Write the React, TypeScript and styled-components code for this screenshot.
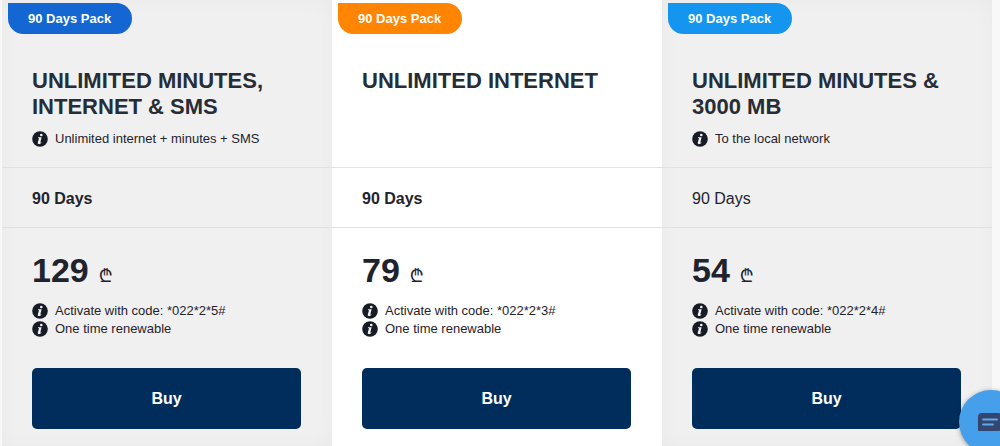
import React from "react";
import styled, { createGlobalStyle } from "styled-components";

const GlobalStyle = createGlobalStyle`
  *, *::before, *::after { box-sizing: border-box; }
  body {
    margin: 0;
    background: #f8f8f8;
    color: #1f232d;
    font-family: "Liberation Sans", Arial, "DejaVu Sans", sans-serif;
  }
`;

const Plans = styled.main`
  display: grid;
  grid-template-columns: repeat(3, minmax(0, 1fr));
  padding: 0 8px 0 2px;
  overflow: hidden;
`;

const Card = styled.article<{ $featured: boolean }>`
  display: flex;
  flex-direction: column;
  background: ${(p) => (p.$featured ? "#ffffff" : "#f0f0f0")};
  box-shadow: ${(p) => (p.$featured ? "none" : "inset 0 0 20px rgba(0, 0, 0, 0.03)")};
`;

const Header = styled.header`
  display: flex;
  flex-direction: column;
  align-items: flex-start;
  height: 168px;
  padding-top: 3px;
  border-bottom: 1px solid #e0e1e2;
`;

const Badge = styled.span<{ $color: string }>`
  margin-left: 6px;
  padding: 0 21px 0 20px;
  border-radius: 0 16px 16px 16px;
  background: ${(p) => p.$color};
  color: #ffffff;
  font-size: 13px;
  font-weight: 700;
  line-height: 31px;
`;

const Title = styled.h2`
  margin: 34px 30px 10px;
  color: #272d37;
  font-size: 22px;
  font-weight: 700;
  line-height: 26px;
`;

const Notes = styled.ul`
  margin: 0;
  padding: 0 30px;
  list-style: none;
`;

const Note = styled.li`
  display: flex;
  align-items: center;
  gap: 7px;
  font-size: 13px;
  line-height: 18px;
`;

const InfoSvg = styled.svg`
  flex: none;
  width: 16px;
  height: 16px;
`;

const Duration = styled.p<{ $strong: boolean }>`
  margin: 0;
  padding: 21px 30px 18px;
  border-bottom: 1px solid #e0e1e2;
  font-size: 16px;
  font-weight: ${(p) => (p.$strong ? 700 : 400)};
  line-height: 20px;
`;

const Price = styled.p`
  display: flex;
  align-items: baseline;
  gap: 10px;
  height: 40px;
  margin: 22px 30px 12px;
  font-size: 34px;
  font-weight: 700;
  line-height: 40px;
`;

const Currency = styled.span`
  font-family: "Noto Sans", "DejaVu Sans", sans-serif;
  font-size: 18px;
  font-weight: 400;
`;

const BuyButton = styled.button`
  margin: 30px 31px 17px 30px;
  padding: 0;
  border: 0;
  border-radius: 5px;
  background: #002d5c;
  color: #ffffff;
  font-family: inherit;
  font-size: 16px;
  font-weight: 700;
  line-height: 61px;
  cursor: pointer;
`;

const ChatButton = styled.button`
  position: fixed;
  right: -23px;
  bottom: -8px;
  display: grid;
  place-items: center;
  width: 64px;
  height: 64px;
  padding: 0;
  border: 0;
  border-radius: 50%;
  background: #469fea;
  box-shadow: 0 1px 5px rgba(0, 0, 0, 0.35);
  cursor: pointer;
`;

function InfoIcon() {
  return (
    <InfoSvg viewBox="0 0 16 16" aria-hidden="true">
      <circle cx="8" cy="8" r="7.8" fill="#171b26" />
      <circle cx="9.3" cy="4" r="1.3" fill="#f4f4f4" />
      <path
        d="M6 6.300h3.600L8.300 11.400c-.1.500.3.400.9-.1l.3.400c-1 1.100-2 1.600-2.900 1.400-.8-.2-1-.8-.8-1.500l1.100-3.900c.1-.5-.1-.7-.9-.8z"
        fill="#f4f4f4"
      />
    </InfoSvg>
  );
}

function ChatIcon() {
  return (
    <svg width="26" height="18" viewBox="0 0 26 18" aria-hidden="true">
      <path d="M4 0h16a4 4 0 0 1 4 4v10a4 4 0 0 1-4 4H1a1 1 0 0 1-1-1V4a4 4 0 0 1 4-4z" fill="#34466f" />
      <path d="M5 6.500h14M5 11.500h10" stroke="#5fa9ec" strokeWidth="1.800" strokeLinecap="round" />
    </svg>
  );
}

interface Plan {
  color: string;
  title: string;
  note?: string;
  price: number;
  code: string;
  featured: boolean;
  strongDuration: boolean;
}

const plans: Plan[] = [
  {
    color: "#1467d2",
    title: "UNLIMITED MINUTES, INTERNET & SMS",
    note: "Unlimited internet + minutes + SMS",
    price: 129,
    code: "*022*2*5#",
    featured: false,
    strongDuration: true,
  },
  {
    color: "#ff8503",
    title: "UNLIMITED INTERNET",
    price: 79,
    code: "*022*2*3#",
    featured: true,
    strongDuration: true,
  },
  {
    color: "#1496f0",
    title: "UNLIMITED MINUTES & 3000 MB",
    note: "To the local network",
    price: 54,
    code: "*022*2*4#",
    featured: false,
    strongDuration: false,
  },
];

function PlanCard({ plan }: { plan: Plan }) {
  return (
    <Card $featured={plan.featured}>
      <Header>
        <Badge $color={plan.color}>90 Days Pack</Badge>
        <Title>{plan.title}</Title>
        {plan.note && (
          <Notes>
            <Note>
              <InfoIcon />
              {plan.note}
            </Note>
          </Notes>
        )}
      </Header>
      <Duration $strong={plan.strongDuration}>90 Days</Duration>
      <Price>
        {plan.price}
        <Currency>₾</Currency>
      </Price>
      <Notes>
        <Note>
          <InfoIcon />
          Activate with code: {plan.code}
        </Note>
        <Note>
          <InfoIcon />
          One time renewable
        </Note>
      </Notes>
      <BuyButton type="button">Buy</BuyButton>
    </Card>
  );
}

export default function App() {
  return (
    <>
      <GlobalStyle />
      <Plans>
        {plans.map((plan) => (
          <PlanCard key={plan.title} plan={plan} />
        ))}
      </Plans>
      <ChatButton type="button" aria-label="Open chat">
        <ChatIcon />
      </ChatButton>
    </>
  );
}
